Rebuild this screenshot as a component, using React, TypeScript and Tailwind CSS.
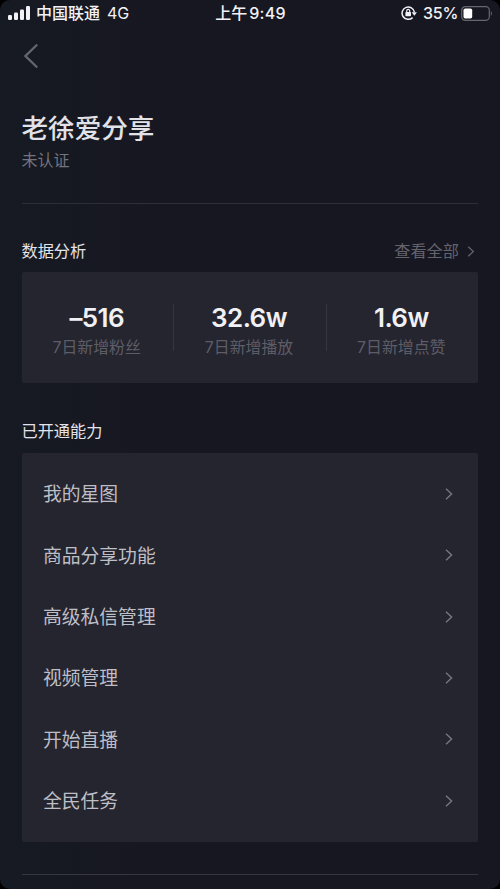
const stats = [
  { value: "–516", label: "7日新增粉丝" },
  { value: "32.6w", label: "7日新增播放" },
  { value: "1.6w", label: "7日新增点赞" },
];

const abilities = ["我的星图", "商品分享功能", "高级私信管理", "视频管理", "开始直播", "全民任务"];

function Chevron({ className }: { className: string }) {
  return (
    <svg className={className} viewBox="0 0 8 12" fill="none" stroke="currentColor" strokeWidth="1.4">
      <path d="M1 0.8 6.6 6 1 11.2" />
    </svg>
  );
}

function StatusBar() {
  return (
    <header className="flex h-[27px] items-center pl-2 pr-[7px] text-[16px] font-medium leading-[26px] text-[#f2f2f6]">
      <div className="flex flex-1 items-center">
        <svg className="-mt-px h-[14px] w-[22px]" viewBox="0 0 22 14" fill="currentColor">
          <rect x="0" y="9" width="4" height="5" rx="1.2" />
          <rect x="6" y="6.5" width="4" height="7.5" rx="1.2" />
          <rect x="12" y="3.5" width="4" height="10.5" rx="1.2" />
          <rect x="18" y="0" width="4" height="14" rx="1.2" />
        </svg>
        <span className="-mt-px ml-[6px]">中国联通</span>
        <span className="-mt-px ml-[7px] font-normal">4G</span>
      </div>
      <div className="-mt-px flex items-center">
        <span>上午</span>
        <span className="ml-[2px] tracking-[0.3px]">9:49</span>
      </div>
      <div className="-mt-px flex flex-1 items-center justify-end">
        <svg className="h-4 w-4" viewBox="0 0 16 16" fill="none" stroke="currentColor" strokeWidth="1.5">
          <path d="M11.6 12.6A6.2 6.2 0 1 1 13.4 7.2" />
          <path d="M10.7 7.2h5.2l-2.6 3.6z" fill="currentColor" stroke="none" />
          <rect x="4.4" y="7" width="5.6" height="4.3" rx="0.7" fill="currentColor" stroke="none" />
          <path d="M5.7 7.4V5.9a1.5 1.5 0 0 1 3 0v1.5" strokeWidth="1.2" />
        </svg>
        <span className="ml-[6px] tracking-[-0.3px]">35%</span>
        <svg className="ml-[3px] h-[15px] w-8" viewBox="0 0 32 15" fill="none">
          <rect x="0.7" y="0.7" width="27.6" height="13.6" rx="3.6" stroke="#66666e" strokeWidth="1.2" />
          <rect x="2.5" y="2.5" width="8.7" height="10" rx="1.8" fill="#fff" />
          <path d="M29.8 5.1c1.5.8 1.5 4 0 4.8z" fill="#66666e" />
        </svg>
      </div>
    </header>
  );
}

export default function App() {
  return (
    <div className="h-[889px] w-[500px] overflow-hidden bg-black font-['Inter','Noto_Sans_CJK_SC',sans-serif]">
      <div className="flex h-full flex-col rounded-[10px] bg-linear-to-r from-[#161a22] via-[#171721] via-30% to-[#171722]">
        <StatusBar />
        <nav className="h-[58px] pl-6 pt-[17px] text-[#65656e]">
          <svg className="h-6 w-[14px]" viewBox="0 0 14 24" fill="none" stroke="currentColor" strokeWidth="2.3" strokeLinecap="round">
            <path d="M12.5 1.2 1.5 12l11 10.8" />
          </svg>
        </nav>
        <main className="flex flex-1 flex-col px-[22px]">
          <section className="h-[119px] border-b border-[#2e2e38] pt-[25px]">
            <h1 className="-ml-[0.5px] text-[26.6px] font-medium leading-9 text-[#e2e2e9]">老徐爱分享</h1>
            <p className="-ml-[0.5px] mt-[2px] text-[16px] leading-6 text-[#73737d]">未认证</p>
          </section>
          <section className="pt-[35px]">
            <div className="flex h-[24px] items-center justify-between">
              <h2 className="-ml-[0.5px] text-[16.2px] text-[#e3e3e9]">数据分析</h2>
              <button className="flex items-center text-[16.2px] text-[#63636d]">
                查看全部
                <Chevron className="ml-[8px] mr-[3px] h-[11px] w-[8px]" />
              </button>
            </div>
            <div className="mt-[9px] flex h-[111px] items-center rounded-[2px] bg-[#25252f]">
              {stats.map((s, i) => (
                <div
                  key={s.label}
                  className={
                    "flex h-[47px] flex-1 flex-col items-center " +
                    (i < stats.length - 1 ? "border-r border-[#363640]" : "")
                  }
                >
                  <span className="-mt-[2px] pr-[2px] text-[26px] font-semibold leading-8 tracking-[-0.6px] text-[#f0f0f5]">
                    {s.value}
                  </span>
                  <span className="mt-[2px] pr-[2px] text-[15.9px] leading-6 text-[#5d5d67]">{s.label}</span>
                </div>
              ))}
            </div>
          </section>
          <section className="pt-[36px]">
            <h2 className="-ml-[0.5px] text-[16.2px] leading-6 text-[#e3e3e9]">已开通能力</h2>
            <ul className="mt-[10px] h-[389px] rounded-[2px] bg-[#25252f] py-[10.5px]">
              {abilities.map((name) => (
                <li key={name} className="flex h-[61.33px] items-center justify-between pl-[21px] pr-[25px]">
                  <span className="pt-[2.5px] text-[18.8px] leading-7 text-[#bebec7]">{name}</span>
                  <Chevron className="h-[12px] w-[8px] text-[#777781]" />
                </li>
              ))}
            </ul>
          </section>
          <div className="mt-8 h-px bg-[#363640]" />
        </main>
      </div>
    </div>
  );
}
